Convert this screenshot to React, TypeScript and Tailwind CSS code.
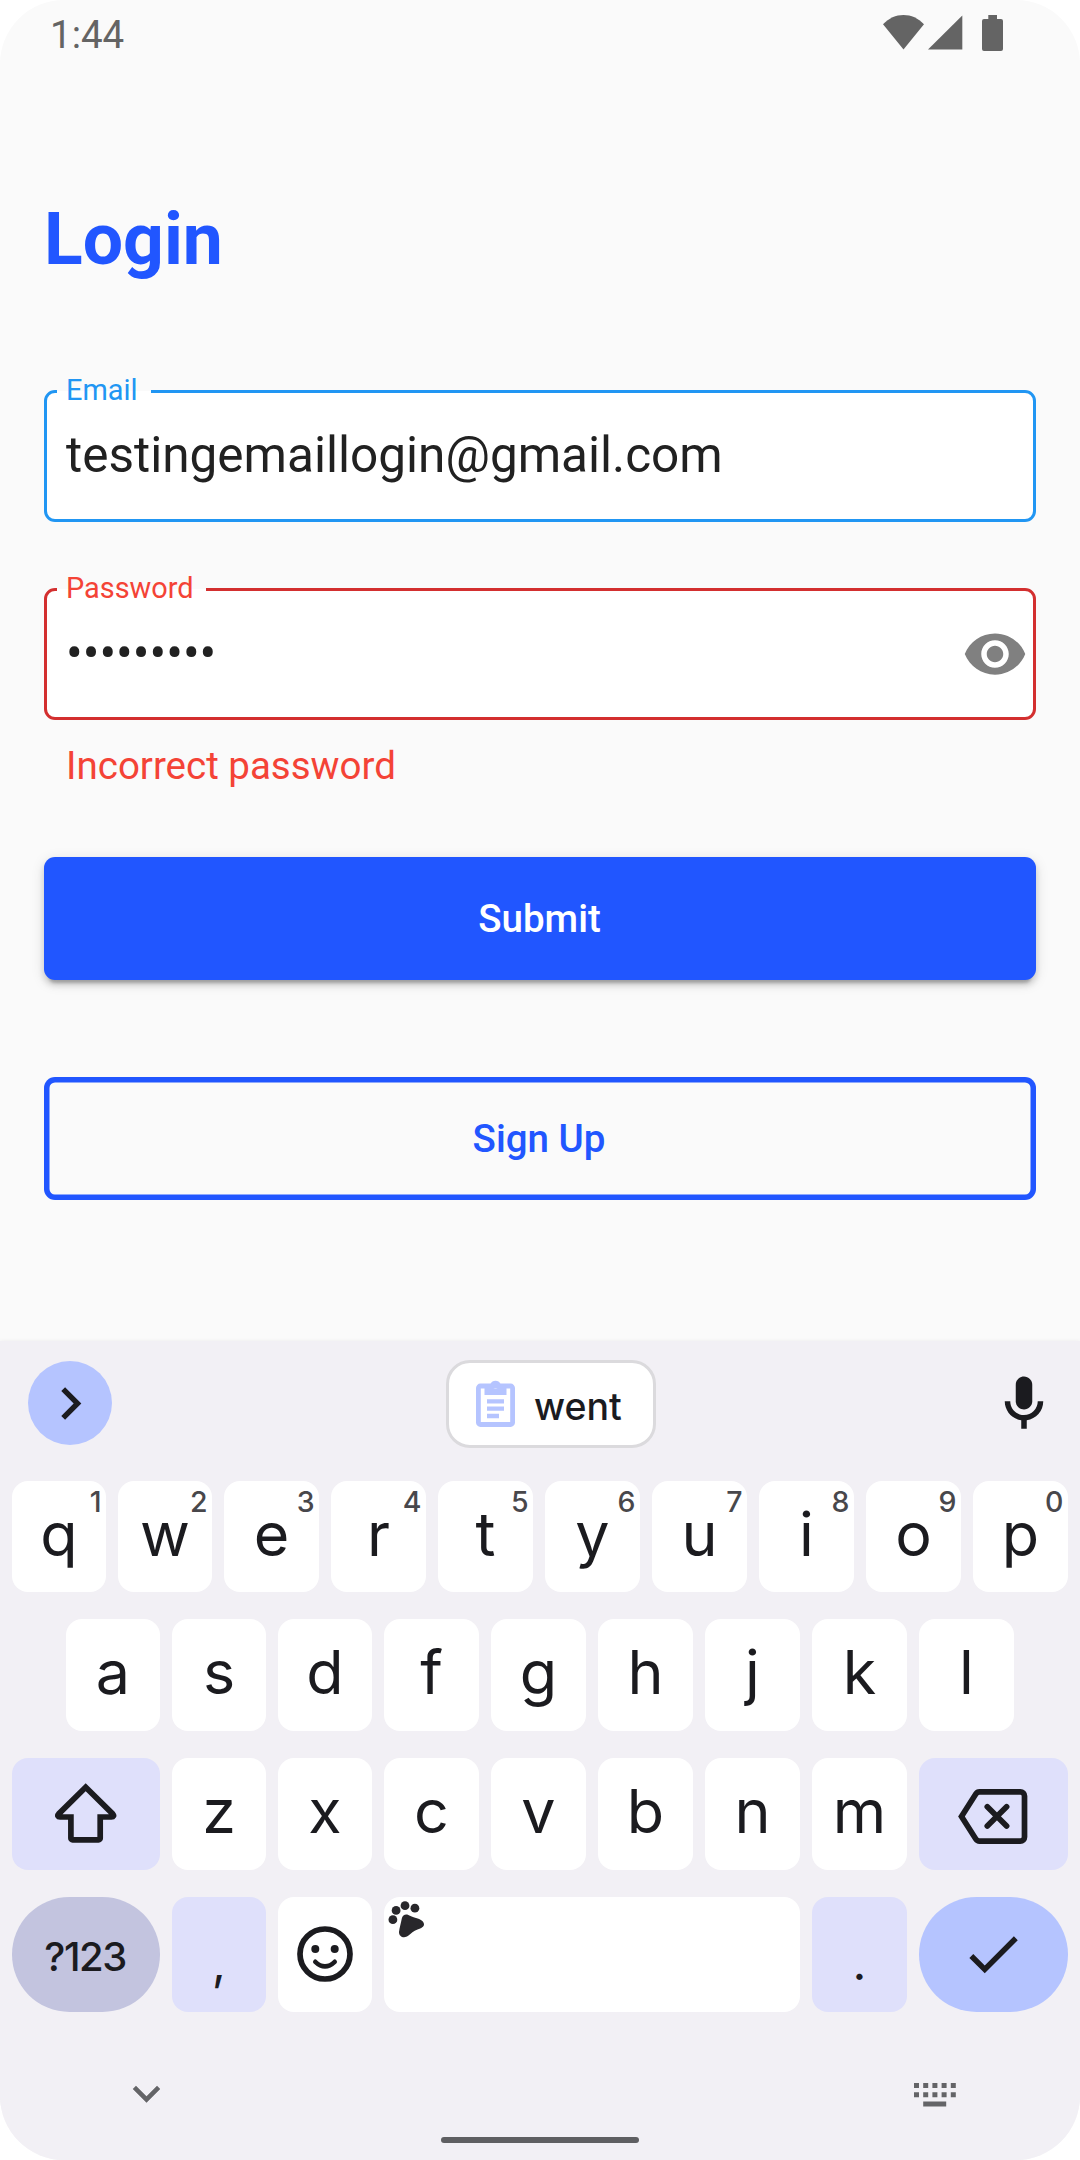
import type { ReactNode } from "react";

const digits = ["1", "2", "3", "4", "5", "6", "7", "8", "9", "0"];

function StatusBar() {
  return (
    <header className="flex h-[70px] shrink-0 items-center justify-between pr-[77px] pl-[50px] text-[#646464]">
      <span className="text-[38.5px] leading-none">1:44</span>
      <div className="flex h-[70px] items-start pt-[15px]">
        <svg className="h-[35px] w-[41px]" viewBox="0 0 41 35" fill="currentColor">
          <path d="M20.5 34.4 0 9.3C5.8 3.2 12.8 0 20.5 0S35.200 3.200 41 9.300z" />
        </svg>
        <svg className="ml-[3.5px] h-[35px] w-[35px]" viewBox="0 0 35 35" fill="currentColor">
          <path d="M0 34.500 34.300 0.500V34.500z" />
        </svg>
        <svg className="ml-[19.5px] h-[36px] w-[21px]" viewBox="0 0 21 36" fill="currentColor">
          <path d="M6.300 0h8.700v4h4a2 2 0 0 1 2 2v28a2 2 0 0 1-2 2H2a2 2 0 0 1-2-2V6a2 2 0 0 1 2-2h4.300z" />
        </svg>
      </div>
    </header>
  );
}

function LoginForm() {
  return (
    <main className="flex flex-col px-[44px]">
      <h1 className="mt-[128px] text-[71.5px] leading-[84px] font-bold text-[#2156ff]">Login</h1>

      <div className="relative mt-[108px] flex h-[132px] items-center rounded-[11px] border-3 border-[#2196f3] bg-white px-[19px] pb-[1px]">
        <span className="absolute -top-[19px] left-[10px] bg-[linear-gradient(#fafafa_0_17px,#fff_17px)] pr-[13px] pl-[9px] text-[28.9px] leading-[32px] text-[#2196f3]">
          Email
        </span>
        <span className="text-[49.5px] leading-none text-[#212121]">testingemaillogin@gmail.com</span>
      </div>

      <div className="relative mt-[66px] flex h-[132px] items-center justify-between rounded-[11px] border-3 border-[#d32f2f] bg-white pr-[5px] pl-[19px]">
        <span className="absolute -top-[19px] left-[10px] bg-[linear-gradient(#fafafa_0_17px,#fff_17px)] pr-[12px] pl-[9px] text-[28.9px] leading-[32px] text-[#f44336]">
          Password
        </span>
        <span className="pb-[1px] text-[49.5px] leading-none text-[#212121]">•••••••••</span>
        <svg className="size-[66px]" viewBox="0 0 24 24" fill="#808080">
          <path d="M12 4.500C7 4.500 2.730 7.610 1 12c1.730 4.390 6 7.500 11 7.500s9.270-3.110 11-7.500c-1.730-4.390-6-7.500-11-7.500zM12 17c-2.760 0-5-2.240-5-5s2.240-5 5-5 5 2.240 5 5-2.240 5-5 5zm0-8c-1.660 0-3 1.340-3 3s1.340 3 3 3 3-1.340 3-3-1.340-3-3-3z" />
        </svg>
      </div>
      <p className="mt-[23px] ml-[22px] text-[38.5px] leading-[46px] text-[#f44336]">Incorrect password</p>

      <button className="mt-[68px] h-[123px] rounded-[11px] bg-[#2156ff] pr-[1px] text-[38.5px] font-medium text-white shadow-[0_8px_3px_-5px_rgba(0,0,0,0.2),0_5px_6px_rgba(0,0,0,0.14),0_3px_14px_rgba(0,0,0,0.12)]">
        Submit
      </button>
      <button className="mt-[97px] h-[123px] rounded-[11px] pr-[2px] text-[38.5px] font-medium text-[#2156ff] shadow-[inset_0_0_0_5.5px_#2156ff]">
        Sign Up
      </button>
    </main>
  );
}

function Key({ children, hint, narrow }: { children: ReactNode; hint?: string; narrow?: boolean }) {
  return (
    <div
      className={`relative flex shrink-0 items-center justify-center rounded-[16px] bg-white pb-[5px] text-[61px] leading-none ${
        narrow ? "w-[94px]" : "w-[95px]"
      }`}
    >
      {children}
      {hint && (
        <span className="absolute top-[6px] right-[5px] text-[28.5px] leading-[30px] font-medium tracking-[-0.5px] text-[#48474b]">
          {hint}
        </span>
      )}
    </div>
  );
}

function SuggestionStrip() {
  return (
    <div className="mx-[28px] mt-[19px] flex h-[88px] items-center justify-between">
      <div className="-mt-[2px] flex size-[84px] items-center justify-center rounded-full bg-[#b5c4ff]">
        <svg className="size-[65px]" viewBox="0 0 24 24" fill="#1b1b1f">
          <path d="M10 6 8.590 7.410 13.170 12l-4.580 4.590L10 18l6-6z" />
        </svg>
      </div>
      <div className="-ml-[1px] flex h-[88px] w-[210px] items-center rounded-[24px] border-3 border-[#dbdadd] bg-white pl-[27px]">
        <svg className="h-[48px] w-[39px]" viewBox="0 0 39 48">
          <rect x="2.400" y="6" width="34.200" height="38.500" rx="2" fill="none" stroke="#b5c4ff" strokeWidth="4.800" />
          <path
            d="M8.500 4h6a5.500 5.500 0 0 1 10 0h6v11h-22zM19.500 4a2.400 2.400 0 1 0 .01 4.800a2.400 2.400 0 0 0-.01-4.800z"
            fill="#b5c4ff"
            fillRule="evenodd"
          />
          <path d="M11 21.300h17M11 28.600h17M11 36h12" stroke="#b5c4ff" strokeWidth="4.300" />
        </svg>
        <span className="ml-[19px] pt-[5px] text-[37.5px] leading-none font-medium">went</span>
      </div>
      <svg className="-mr-[5px] size-[66px]" viewBox="0 0 24 24" fill="#1b1b1f">
        <path d="M12 14c1.660 0 3-1.340 3-3V5c0-1.660-1.340-3-3-3S9 3.340 9 5v6c0 1.660 1.340 3 3 3z" />
        <path d="M17 11c0 2.760-2.240 5-5 5s-5-2.240-5-5H5c0 3.530 2.610 6.430 6 6.920V21h2v-3.080c3.390-.49 6-3.390 6-6.920z" />
      </svg>
    </div>
  );
}

function ShiftIcon() {
  return (
    <svg className="-mt-[2px] h-[60px] w-[62px]" viewBox="0 0 62 60" fill="none" stroke="#1b1b1f" strokeWidth="5.700">
      <path d="M15.900 34H5c-2.200 0-2.800-1.500-1.500-2.900L30.700 4.300 57.900 31.100c1.300 1.400.7 2.900-1.500 2.900H45.200V55.200a1.600 1.600 0 0 1-1.600 1.600H17.500a1.600 1.600 0 0 1-1.600-1.600z" />
    </svg>
  );
}

function BackspaceIcon() {
  return (
    <svg className="h-[55px] w-[70px]" viewBox="0 0 70 55" fill="none" stroke="#1b1b1f" strokeWidth="5.700">
      <path d="M3.500 27.500 17.800 5Q19.200 2.900 21.500 2.900H62.300a4.200 4.200 0 0 1 4.200 4.200V47.900a4.200 4.200 0 0 1-4.200 4.200H21.500Q19.200 52.100 17.800 50z" />
      <path d="m29.300 17.800 19.300 19.300M48.600 17.800 29.300 37.100" strokeLinecap="round" />
    </svg>
  );
}

function Keyboard() {
  return (
    <section className="flex h-[819px] flex-col bg-[#f2f0f5] font-[Inter,sans-serif] text-[#1b1b1f] shadow-[0_0_4px_rgba(0,0,0,0.06)]">
      <SuggestionStrip />

      <div className="mx-[12px] mt-[33px] flex h-[111px] gap-[12px]">
        {"qwertyuiop".split("").map((letter, i) => (
          <Key key={letter} hint={digits[i]} narrow={i < 2}>
            {letter}
          </Key>
        ))}
      </div>

      <div className="mx-[66px] mt-[27px] flex h-[112px] gap-[12px]">
        {"asdfghjkl".split("").map((letter, i) => (
          <Key key={letter} narrow={i < 3}>
            {letter}
          </Key>
        ))}
      </div>

      <div className="mx-[12px] mt-[27px] flex h-[112px] gap-[12px]">
        <div className="flex w-[148px] items-center justify-center rounded-[16px] bg-[#dfe0fb]">
          <ShiftIcon />
        </div>
        {"zxcvbnm".split("").map((letter, i) => (
          <Key key={letter} narrow={i < 2}>
            {letter}
          </Key>
        ))}
        <div className="flex w-[149px] items-center justify-center rounded-[16px] bg-[#dfe0fb] pt-[4px] pr-[2px]">
          <BackspaceIcon />
        </div>
      </div>

      <div className="mx-[12px] mt-[27px] flex h-[115px] gap-[12px]">
        <div className="flex w-[148px] items-center justify-center rounded-full bg-[#c3c4df] pt-[4px] pr-[2px] text-[40px] leading-none font-medium tracking-[-1.5px]">
          ?123
        </div>
        <div className="flex w-[94px] items-center justify-center rounded-[16px] bg-[#dfe0fb] pt-[17px] text-[48px] leading-none">
          ,
        </div>
        <div className="flex w-[94px] items-center justify-center rounded-[16px] bg-white pb-[2px]">
          <svg className="size-[56px]" viewBox="0 0 56 56" fill="none" stroke="#1b1b1f">
            <circle cx="28" cy="28" r="25" strokeWidth="5.700" />
            <circle cx="18.300" cy="23" r="4" fill="#1b1b1f" stroke="none" />
            <circle cx="37.700" cy="23" r="4" fill="#1b1b1f" stroke="none" />
            <path d="M18.300 35.800q9.700 9.200 19.400 0" strokeWidth="4.600" strokeLinecap="round" />
          </svg>
        </div>
        <div className="flex-1 rounded-[16px] bg-white pt-[4px] pl-[4px]">
          <svg className="h-[37px] w-[37px]" viewBox="0 0 37 37" fill="#28272b">
            <circle cx="4.900" cy="18.700" r="4.400" />
            <circle cx="8.100" cy="9.400" r="4.400" />
            <circle cx="17" cy="4.700" r="4.400" />
            <circle cx="26.900" cy="7.200" r="4.400" />
            <path d="M13.800 17.500C14.500 14.100 17.500 12.600 20.300 13.900 22.500 15.100 24.500 15.500 28 17 32.500 18 36 20.500 36 23.300c0 2.700-2.500 3.900-6.500 5.100C25.500 29.600 23 32.500 20.500 34.500 16 38 10.900 35.500 11 31c.5-4.500 1.900-8.500 2.800-13.500z" />
          </svg>
        </div>
        <div className="flex w-[95px] items-center justify-center rounded-[16px] bg-[#dfe0fb] pt-[17px] text-[48px] leading-none">
          .
        </div>
        <div className="flex w-[149px] items-center justify-center rounded-full bg-[#b5c4ff] pr-[1px] pb-[1px]">
          <svg className="size-[66px]" viewBox="0 0 24 24" fill="#1b1b1f">
            <path d="M9 16.170 4.830 12l-1.420 1.410L9 19 21 7l-1.410-1.410z" />
          </svg>
        </div>
      </div>

      <nav className="mt-[54px] flex h-[55px] items-center justify-between pr-[124px] pl-[119px] text-[#646467]">
        <svg className="size-[55px]" viewBox="0 0 24 24" fill="currentColor">
          <path d="M16.590 8.590 12 13.170 7.410 8.590 6 10l6 6 6-6z" />
        </svg>
        <svg className="mt-[2px] h-[24px] w-[42px]" viewBox="0 0 42 24" fill="none" stroke="currentColor" strokeWidth="5">
          <path d="M0 2.500h42M0 11.800h42" strokeDasharray="5 4.200" />
          <path d="M9.200 21h23" />
        </svg>
      </nav>
      <div className="mx-auto mt-[16px] h-[6px] w-[198px] rounded-full bg-[#5f5f62]" />
    </section>
  );
}

export default function App() {
  return (
    <div className="h-[2160px] w-[1080px] bg-white">
      <div className="flex h-full flex-col justify-between overflow-hidden rounded-[64px] bg-[#fafafa] font-[Roboto,sans-serif]">
        <div className="flex flex-col">
          <StatusBar />
          <LoginForm />
        </div>
        <Keyboard />
      </div>
    </div>
  );
}
